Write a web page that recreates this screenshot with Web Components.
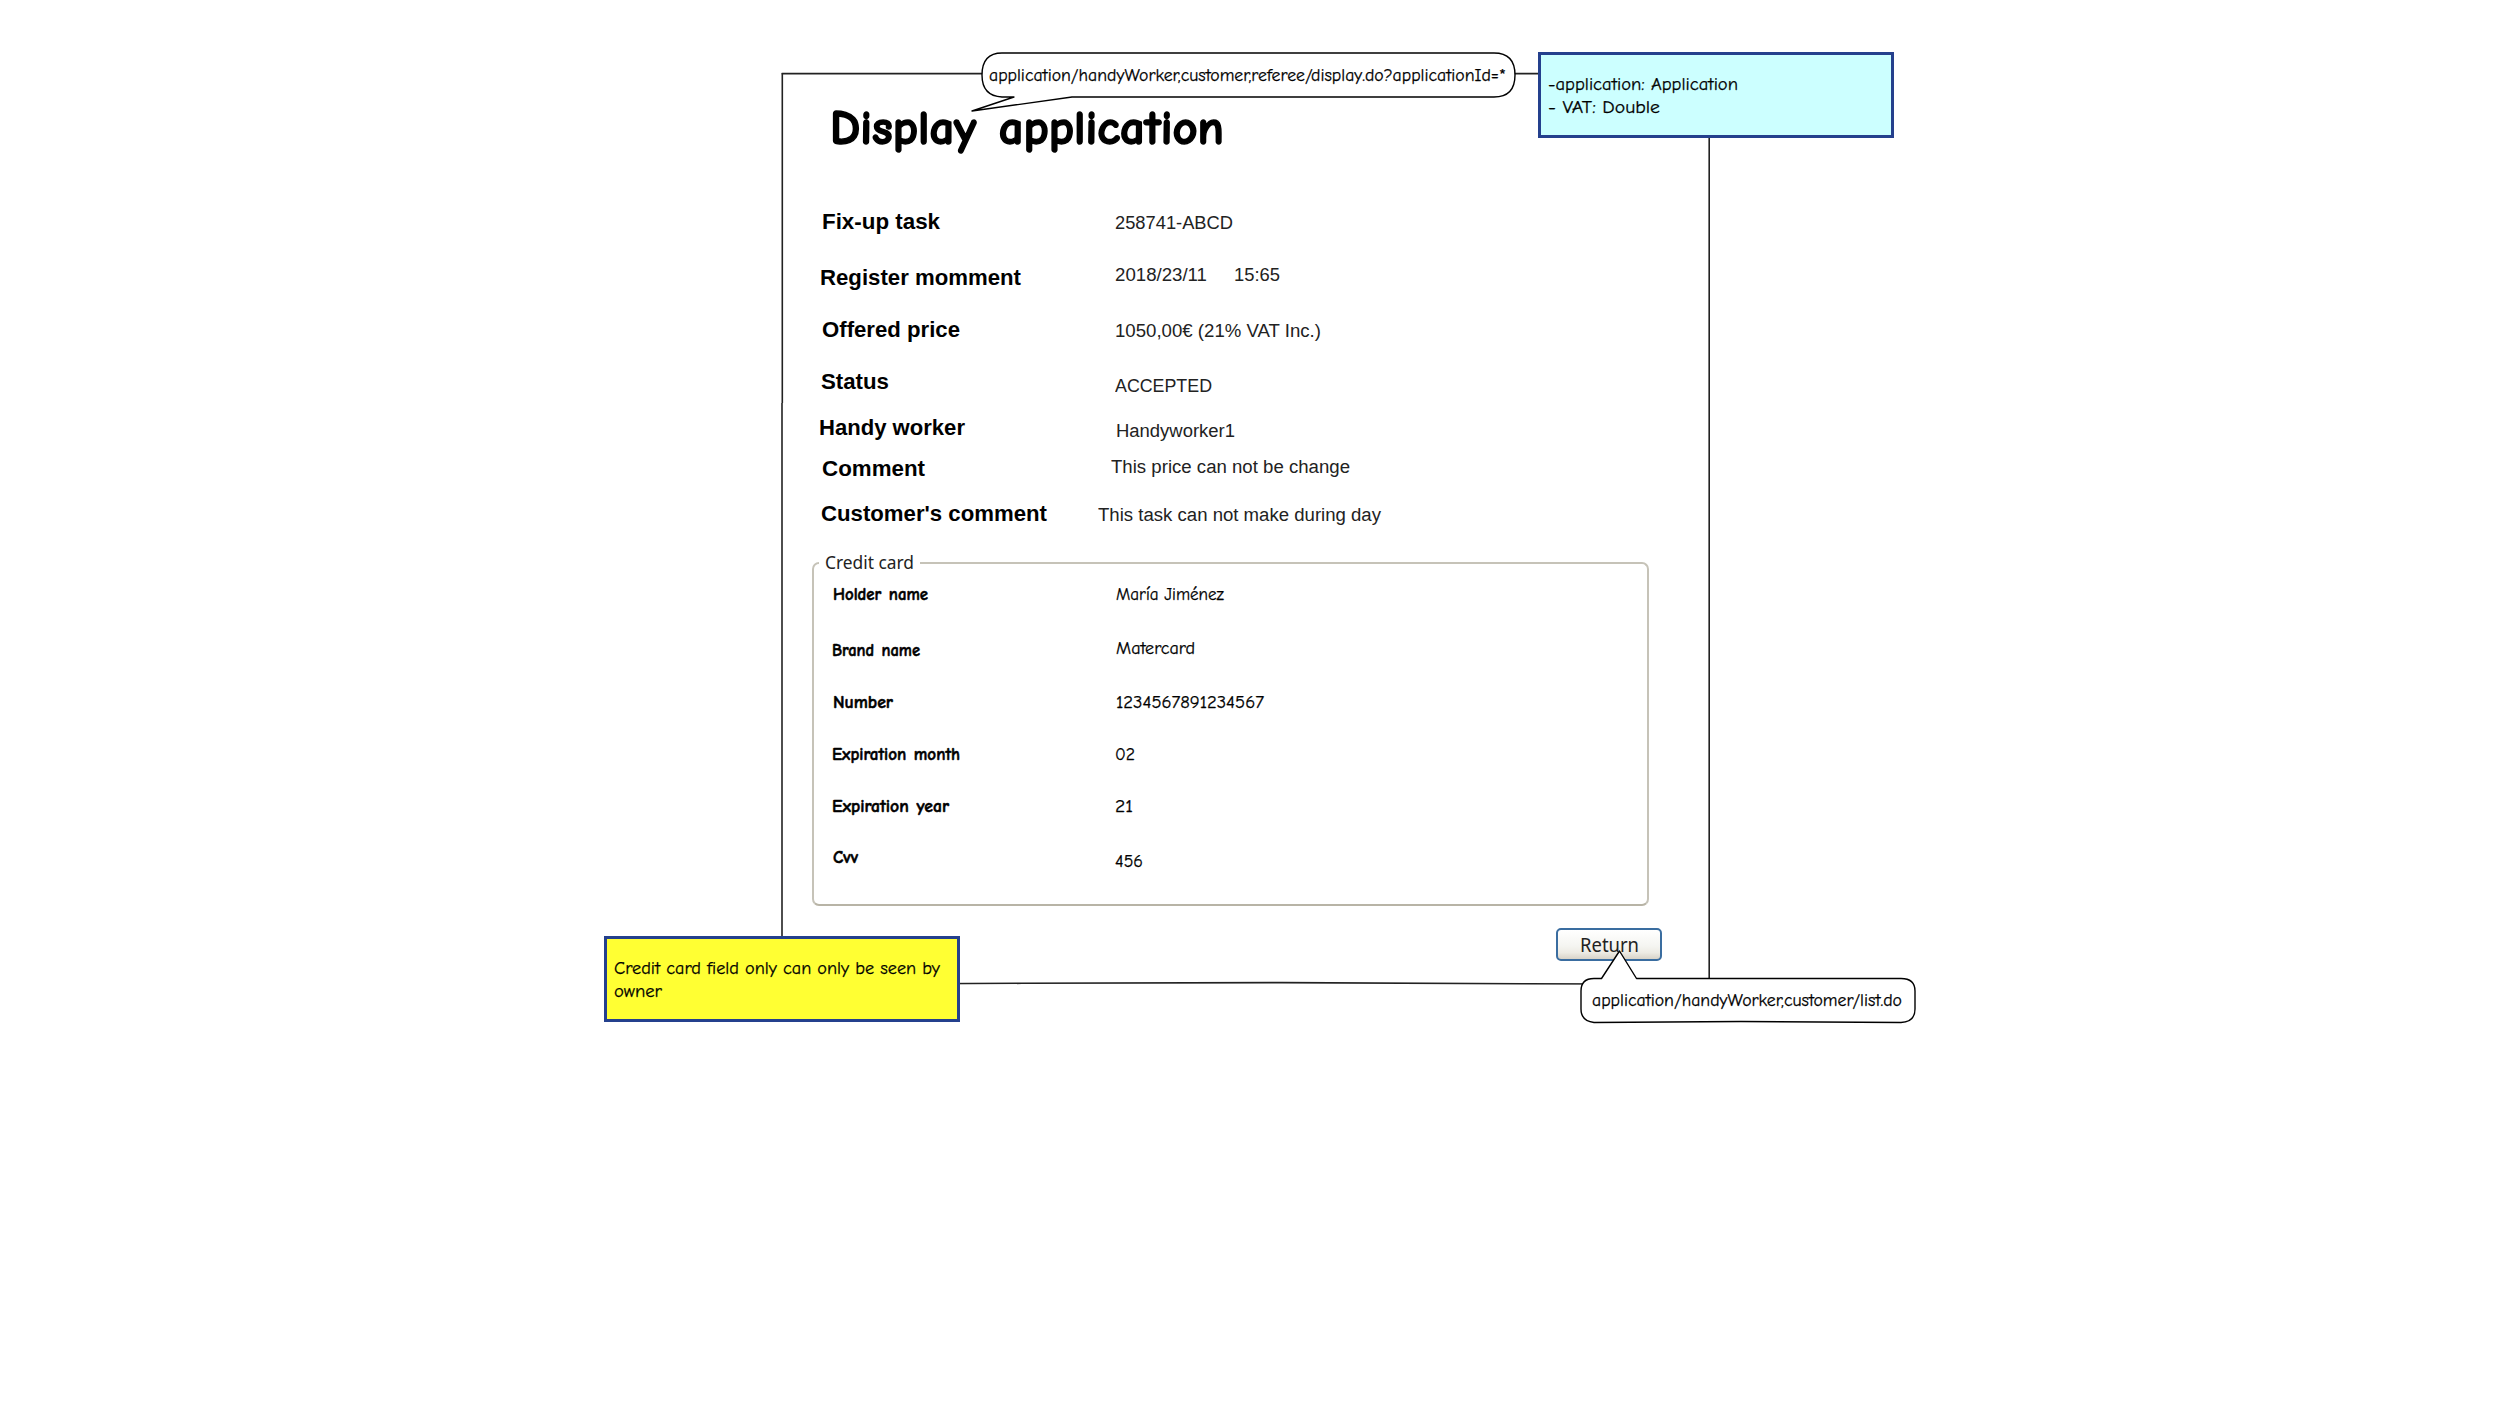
<!DOCTYPE html>
<html lang="en">
<head>
<meta charset="utf-8">
<title>Display application</title>
<style>
html, body { margin: 0; background: #fff; }
body { color: #000; }
</style>
</head>
<body>
<mock-canvas></mock-canvas>
<script>
// Text on a given baseline, stretched to a given width.
const FACES = {
  comic: ['"Comic Sans MS", "Comic Neue", "Open Sans", sans-serif', .33],
  arial: ['"Liberation Sans", Arial, sans-serif', .3465],
  tahoma: ['"Noto Sans", Tahoma, sans-serif', .388]
};
customElements.define('fit-text', class extends HTMLElement {
  connectedCallback() {
    const a = (n, d) => this.getAttribute(n) ?? d;
    const size = +a('size', 17.2), [family, shift] = FACES[a('face', 'comic')];
    const top = Math.round(+a('base', 12 + shift * size) - 12 - shift * size + .2);
    const stroke = a('face', 'comic') === 'comic' ? a('stroke', .25) : 0;
    this.attachShadow({ mode: 'open' }).innerHTML = `<style>
      :host { display: block; box-sizing: border-box; flex: none; width: ${a('w')}px; margin-left: ${a('dx', 0)}px; margin-top: ${top}px; height: 24px; }
      span { display: inline-block; white-space: pre; font: ${a('weight', 400)} ${size}px/24px ${family}; word-spacing: ${a('gap', 0)}px; color: ${a('color', '#000')}; -webkit-text-stroke: ${stroke}px currentColor; paint-order: stroke; stroke-linejoin: round; transform-origin: 0 50%; }
    </style><span><slot></slot></span>`;
    const span = this.shadowRoot.querySelector('span');
    const natural = span.getBoundingClientRect().width;
    if (natural) span.style.transform = `scaleX(${a('w') / natural})`;
  }
});
customElements.define('field-row', class extends HTMLElement {
  connectedCallback() {
    this.attachShadow({ mode: 'open' }).innerHTML = `<style>
      :host { display: grid; grid-template-columns: var(--label-col) 1fr; align-items: start; height: ${this.getAttribute('h')}px; }
      div { display: flex; align-items: flex-start; }
    </style><div><slot name="label"></slot></div><div><slot></slot></div>`;
  }
});
customElements.define('group-box', class extends HTMLElement {
  connectedCallback() {
    this.attachShadow({ mode: 'open' }).innerHTML = `<style>
      :host { display: block; box-sizing: border-box; width: 837px; height: 344px; margin: 20px 0 0 30px; border: 2px solid #c6c3b8; border-bottom-color: #b8b4a6; border-radius: 7px; --label-col: 284px; }
      header { width: 95px; height: 28px; margin: -20px 0 0 5px; padding-left: 6px; box-sizing: content-box; background: #fff; display: flex; align-items: flex-start; }
    </style><header><slot name="legend"></slot></header><slot></slot>`;
  }
});
customElements.define('push-button', class extends HTMLElement {
  connectedCallback() {
    this.attachShadow({ mode: 'open' }).innerHTML = `<style>
      :host { display: block; margin: 22px 0 0 774px; }
      button { display: flex; align-items: flex-start; box-sizing: border-box; width: 106px; height: 33px; padding: 0 0 0 22px; border: 2px solid #3a6da0; border-radius: 5px; background: linear-gradient(#fff, #f5f5f1 55%, #edebe4 78%, #d8d3c8); }
    </style><button><slot></slot></button>`;
  }
});
customElements.define('page-frame', class extends HTMLElement {
  connectedCallback() {
    this.attachShadow({ mode: 'open' }).innerHTML = `<style>
      :host { display: block; position: relative; width: 928px; height: 912px; --label-col: 316px; }
      svg { position: absolute; inset: 0; overflow: visible; z-index: -1; }
    </style><svg width="928" height="912" fill="none" stroke="#222" stroke-width="1.6">
      <path d="M-.3 .6H927.2V911"/><path d="M.3 0V330M0 330V912"/>
      <path d="M0 911.5L240 910.3L500 909.6L740 910.8L928 911.3"/></svg><slot></slot>`;
  }
});
customElements.define('sticky-note', class extends HTMLElement {
  connectedCallback() {
    this.attachShadow({ mode: 'open' }).innerHTML = `<style>
      :host { position: absolute; box-sizing: border-box; display: flex; flex-direction: column; width: 356px; height: 86px; padding: 16px 0 0 7px; border: 3px solid #24408d; }
    </style><slot></slot>`;
  }
});
customElements.define('speech-bubble', class extends HTMLElement {
  connectedCallback() {
    this.attachShadow({ mode: 'open' }).innerHTML = `<style>
      :host { position: absolute; display: flex; z-index: 2; }
      svg { position: absolute; inset: 0; overflow: visible; z-index: -1; }
    </style><svg width="10" height="10"><path d="${this.getAttribute('shape')}" fill="#fff" stroke="#000" stroke-width="1.4" stroke-linejoin="round"/></svg><slot></slot>`;
  }
});
const field = (h, label, value) => `<field-row h="${h}">${label}${value}</field-row>`;
const aL = (t, x, w, b) => `<fit-text slot="label" face="arial" weight="700" size="21.4" dx="${x - 782}" w="${w}" base="${b + .7}">${t}</fit-text>`;
const aV = (t, x, w, b) => `<fit-text face="arial" size="18" color="#222" dx="${x - 1098}" w="${w}" base="${b}">${t}</fit-text>`;
const cL = (t, x, w, b) => `<fit-text slot="label" weight="700" stroke=".5" gap="1.5" dx="${x - 814}" w="${w}" base="${b + .9}">${t}</fit-text>`;
const cV = (t, x, w, b) => `<fit-text dx="${x - 1098}" w="${w}" base="${b + .5}">${t}</fit-text>`;
customElements.define('mock-canvas', class extends HTMLElement {
  connectedCallback() {
    this.attachShadow({ mode: 'open' }).innerHTML = `<style>
      :host { display: block; position: relative; box-sizing: border-box; z-index: 0; width: 2499px; height: 1407px; padding: 73px 0 0 782px; background: #fff; }
      .title { display: flex; align-items: flex-start; height: 127px; margin: 0; }
      .info { left: 1538px; top: 52px; background: #cff; }
      .warn { left: 604px; top: 936px; background: #ff3; }
      .url { left: 982px; top: 53px; }
      .link { left: 1581px; top: 978px; }
    </style>
    <page-frame>
      <h1 class="title"><fit-text weight="700" size="47.5" stroke="1.5" gap="5" dx="47.5" w="394" base="69">Display application</fit-text></h1>
      ${field(56, aL('Fix-up task', 821.5, 118, 28.7), aV('258741-ABCD', 1115, 118, 29))}
      ${field(52, aL('Register momment', 820, 201, 29), aV('2018/23/11', 1115, 92, 25) + aV('15:65', 1124.5, 46, 25))}
      ${field(52, aL('Offered price', 821.5, 138, 28.7), aV('1050,00€ (21% VAT Inc.)', 1115, 206, 29.3))}
      ${field(46, aL('Status', 820.5, 68, 28.7), aV('ACCEPTED', 1115, 97, 32.3))}
      ${field(42, aL('Handy worker', 819, 146, 28.7), aV('Handyworker1', 1116, 119, 31))}
      ${field(44, aL('Comment', 821.5, 103, 27.7), aV('This price can not be change', 1111, 239, 25.3))}
      ${field(50, aL("Customer's comment", 820.5, 226, 28.6), aV('This task can not make during day', 1098, 283, 29))}
      <group-box>
        <fit-text slot="legend" face="tahoma" size="17.5" color="#222" w="89" base="25">Credit card</fit-text>
        ${field(56, cL('Holder name', 833, 95, 27.7), cV('María Jiménez', 1116, 108, 27.5))}
        ${field(52, cL('Brand name', 832, 88, 27.7), cV('Matercard', 1116, 79, 25.5))}
        ${field(52, cL('Number', 833, 60, 27.7), cV('1234567891234567', 1116, 148, 28))}
        ${field(52, cL('Expiration month', 832, 128, 27.4), cV('02', 1115, 20, 27.5))}
        ${field(50, cL('Expiration year', 832, 117, 27.1), cV('21', 1115, 18, 27.5))}
        ${field(60, cL('Cvv', 833, 25, 28.7), cV('456', 1115, 28, 33))}
      </group-box>
      <push-button><fit-text face="tahoma" size="20" color="#222" w="59" base="22.6">Return</fit-text></push-button>
    </page-frame>
    <sticky-note class="info">
      <fit-text size="18.8" w="190" base="19.2">-application: Application</fit-text>
      <fit-text size="18.8" w="112" base="17.2">- VAT: Double</fit-text>
    </sticky-note>
    <sticky-note class="warn">
      <fit-text size="18.8" w="326" base="19.2">Credit card field only can only be seen by</fit-text>
      <fit-text size="18.8" w="48" base="17.2">owner</fit-text>
    </sticky-note>
    <speech-bubble class="url" shape="M20 0H512Q533 0 533 22Q533 44 512 44H90L-10 58L32 44H20Q0 43 0 22Q0 0 20 0Z">
      <fit-text dx="7" w="517" base="28">application/handyWorker,customer,referee/display.do?applicationId=*</fit-text>
    </speech-bubble>
    <speech-bubble class="link" shape="M13 .5H20.5L38.5 -27L55.5 .5H320Q334 .5 334 13V31Q334 44 320 44.5L160 43.5L13 44.5Q0 43 0 31V13Q0 .5 13 .5Z">
      <fit-text dx="11" w="310" base="28">application/handyWorker,customer/list.do</fit-text>
    </speech-bubble>`;
  }
});
</script>
</body>
</html>
